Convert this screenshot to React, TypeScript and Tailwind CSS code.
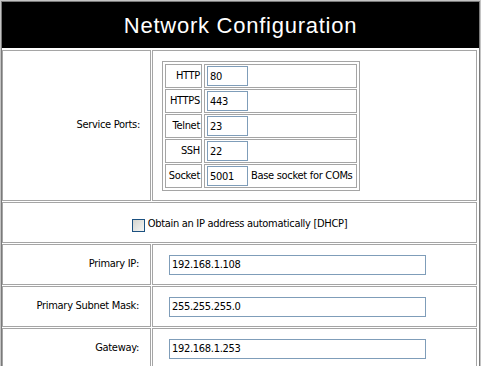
const ports = [
  { name: "HTTP", value: "80" },
  { name: "HTTPS", value: "443" },
  { name: "Telnet", value: "23" },
  { name: "SSH", value: "22" },
  { name: "Socket", value: "5001", note: "Base socket for COMs" },
];

const ipRows = [
  { label: "Primary IP:", value: "192.168.1.108" },
  { label: "Primary Subnet Mask:", value: "255.255.255.0" },
  { label: "Gateway:", value: "192.168.1.253" },
];

const App = () => {
  return (
    <div className="w-[481px] h-[366px] overflow-hidden bg-white text-black text-[11px] tracking-[-0.3px] font-['DejaVu_Sans_Condensed','DejaVu_Sans',sans-serif]">
      <div className="border border-[#c4c4c4]">
        <div className="border border-[#7a7a7a] pb-[4px]">
          <div className="h-[46px] bg-black flex items-center justify-center text-white text-[22px] tracking-[0.75px] font-['Liberation_Sans',Arial,sans-serif]">
            Network Configuration
          </div>

          <div className="mt-[2px] pr-[2px] flex flex-col gap-[1px]">
            {/* service ports */}
            <div className="flex gap-[1px]">
              <div className="w-[149px] border border-[#a5a5a5] flex items-center justify-end pr-[10px]">
                Service Ports:
              </div>
              <div className="flex-1 border border-[#a5a5a5] pl-[9px] pt-[10px] pb-[9px]">
                <div className="w-[198px] border border-[#a5a5a5] p-[2px] flex flex-col gap-[1px]">
                  {ports.map((p) => (
                    <div key={p.name} className="flex gap-[2px] h-[24px]">
                      <div className="w-[37px] border border-[#a5a5a5] flex items-center justify-end pr-[1px]">
                        {p.name}
                      </div>
                      <div className="flex-1 border border-[#a5a5a5] flex items-center pl-[2px] gap-[3px] whitespace-nowrap">
                        <input
                          type="text"
                          defaultValue={p.value}
                          className="w-[41px] h-[20px] border border-[#7f9db9] px-[2px] outline-none"
                        />
                        {p.note && <span>{p.note}</span>}
                      </div>
                    </div>
                  ))}
                </div>
              </div>
            </div>

            {/* dhcp */}
            <div className="h-[41px] border border-[#a5a5a5] flex items-center justify-center pt-[4px]">
              <label className="flex items-end gap-[3px]">
                <input
                  type="checkbox"
                  className="appearance-none w-[13px] h-[13px] border border-[#1c5180] bg-gradient-to-br from-[#d4d4ce] to-[#f6f6f4] mb-[1px]"
                />
                <span>Obtain an IP address automatically [DHCP]</span>
              </label>
            </div>

            {ipRows.map((r) => (
              <div key={r.label} className="flex gap-[1px] h-[41px]">
                <div className="w-[149px] border border-[#a5a5a5] flex items-center justify-end pr-[11px]">
                  {r.label}
                </div>
                <div className="flex-1 border border-[#a5a5a5] flex items-center pl-[16px]">
                  <input
                    type="text"
                    defaultValue={r.value}
                    className="w-[257px] h-[20px] border border-[#7f9db9] px-[2px] outline-none"
                  />
                </div>
              </div>
            ))}
          </div>
        </div>
      </div>
    </div>
  );
};

export default App;
